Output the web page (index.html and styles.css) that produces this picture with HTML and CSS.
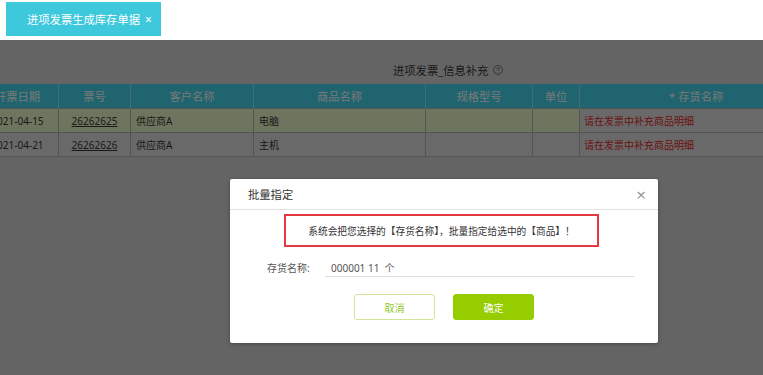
FILE: index.html
```html
<!DOCTYPE html>
<html lang="zh-CN">
<head>
    <meta charset="UTF-8">
    <meta name="viewport" content="width=device-width, initial-scale=1.0">
    <title>进项发票生成库存单据</title>
    <link rel="stylesheet" href="styles.css">
</head>
<body>

    <div class="topbar">
        <div class="tab">进项发票生成库存单据<span class="tab-close">×</span></div>
    </div>

    <div class="main">
        <div class="page-title">
            进项发票_信息补充
            <svg class="help-icon" width="10" height="10" viewBox="0 0 10 10">
                <circle cx="5" cy="5" r="4.4" fill="none" stroke="#555" stroke-width="0.8"/>
                <path d="M3.6 3.9 C3.6 2.4 6.4 2.4 6.4 3.9 C6.4 4.9 5 4.9 5 6" fill="none" stroke="#555" stroke-width="0.8"/>
                <circle cx="5" cy="7.4" r="0.5" fill="#555"/>
            </svg>
        </div>

        <div class="table-wrap">
            <table class="grid">
                <colgroup>
                    <col style="width: 82px">
                    <col style="width: 72px">
                    <col style="width: 123px">
                    <col style="width: 172px">
                    <col style="width: 107px">
                    <col style="width: 47px">
                    <col style="width: 233px">
                </colgroup>
                <thead>
                    <tr>
                        <th>开票日期</th>
                        <th>票号</th>
                        <th>客户名称</th>
                        <th>商品名称</th>
                        <th>规格型号</th>
                        <th>单位</th>
                        <th>* 存货名称</th>
                    </tr>
                </thead>
                <tbody>
                    <tr class="selected">
                        <td class="center">2021-04-15</td>
                        <td class="center"><a class="invoice-no">26262625</a></td>
                        <td>供应商A</td>
                        <td>电脑</td>
                        <td></td>
                        <td></td>
                        <td class="stock">请在发票中补充商品明细</td>
                    </tr>
                    <tr>
                        <td class="center">2021-04-21</td>
                        <td class="center"><a class="invoice-no">26262626</a></td>
                        <td>供应商A</td>
                        <td>主机</td>
                        <td></td>
                        <td></td>
                        <td class="stock">请在发票中补充商品明细</td>
                    </tr>
                </tbody>
            </table>
        </div>

        <div class="mask"></div>

        <div class="dialog">
            <div class="dialog-header">
                <span class="dialog-title">批量指定</span>
                <span class="dialog-close">×</span>
            </div>
            <div class="dialog-body">
                <div class="notice">系统会把您选择的【存货名称】，批量指定给选中的【商品】！</div>
                <div class="form-row">
                    <label class="form-label">存货名称:</label>
                    <div class="form-input">000001 11&nbsp; 个</div>
                </div>
                <div class="btn-row">
                    <button class="btn btn-cancel">取消</button>
                    <button class="btn btn-ok">确定</button>
                </div>
            </div>
        </div>
    </div>

</body>
</html>
```

FILE: styles.css
```css
body {
    font-family: "Noto Sans", "Noto Sans CJK SC", sans-serif;
    margin: 0;
    padding: 0;
    background-color: #fff;
    color: #333;
    overflow: hidden;
}

.topbar {
    height: 40px;
    background-color: #fff;
    padding: 2px 0 0 6px;
    box-sizing: border-box;
}

.tab {
    display: inline-flex;
    align-items: center;
    width: 155px;
    height: 34px;
    padding-left: 21px;
    box-sizing: border-box;
    background-color: #3ec8dc;
    color: #fff;
    font-size: 11.3px;
}

.tab-close {
    margin-left: 5px;
    font-size: 12px;
}

.main {
    position: relative;
    height: 335px;
    background-color: #c8c8c8;
    overflow: hidden;
}

.page-title {
    display: flex;
    align-items: center;
    padding: 22px 0 0 393px;
    height: 16px;
    font-size: 11.3px;
    color: #333;
}

.help-icon {
    margin-left: 5px;
}

.table-wrap {
    margin-top: 6px;
    margin-left: -24px;
}

.grid {
    border-collapse: collapse;
    table-layout: fixed;
    width: 836px;
    font-size: 10px;
}

.grid th {
    height: 24px;
    padding: 0;
    background-color: #3ec8dc;
    color: #f2f2f2;
    font-weight: normal;
    font-size: 11.3px;
    border-left: 1px solid #7fdbe8;
}

.grid td {
    height: 23px;
    padding: 0 5px;
    background-color: #d3d3d3;
    border: 1px solid #a9a9a9;
    color: #333;
}

.grid tr.selected td {
    background-color: #dcebbc;
}

.grid tr.selected td.stock,
.grid td.stock {
    background-color: #d3d3d3;
    color: #d81e1e;
    padding-left: 4px;
}

.grid td.center {
    text-align: center;
}

.invoice-no {
    text-decoration: underline;
    color: #333;
}

.mask {
    position: absolute;
    top: 0;
    left: 0;
    right: 0;
    bottom: 0;
    background-color: rgba(0, 0, 0, 0.5);
}

.dialog {
    position: absolute;
    left: 230px;
    top: 139px;
    width: 428px;
    height: 164px;
    background-color: #fff;
    border-radius: 2px;
    box-shadow: 0 1px 4px rgba(0, 0, 0, 0.3);
}

.dialog-header {
    display: flex;
    justify-content: space-between;
    align-items: center;
    height: 30px;
    padding: 0 12px 0 18px;
    border-bottom: 1px solid #e3e3e3;
}

.dialog-title {
    font-size: 11.3px;
    color: #333;
}

.dialog-close {
    font-size: 17px;
    color: #999;
}

.dialog-body {
    padding-top: 4px;
}

.notice {
    width: 315px;
    height: 33px;
    margin-left: 54px;
    box-sizing: border-box;
    border: 2px solid #e5393f;
    display: flex;
    align-items: center;
    justify-content: center;
    font-size: 9.7px;
    color: #333;
}

.form-row {
    display: flex;
    align-items: flex-end;
    margin-top: 13px;
    padding-left: 37px;
}

.form-label {
    width: 58px;
    font-size: 10px;
    color: #555;
    line-height: 17px;
}

.form-input {
    width: 309px;
    height: 17px;
    padding-left: 6px;
    box-sizing: border-box;
    border-bottom: 1px solid #ddd;
    font-size: 10px;
    line-height: 16px;
    color: #555;
}

.btn-row {
    display: flex;
    justify-content: center;
    gap: 18px;
    margin-top: 17px;
}

.btn {
    width: 81px;
    height: 26px;
    border-radius: 3px;
    font-family: inherit;
    font-size: 10px;
    cursor: pointer;
}

.btn-cancel {
    background-color: #fff;
    border: 1px solid #cfe69a;
    color: #96c82a;
}

.btn-ok {
    background-color: #95cd00;
    border: 1px solid #95cd00;
    color: #fff;
}
```
